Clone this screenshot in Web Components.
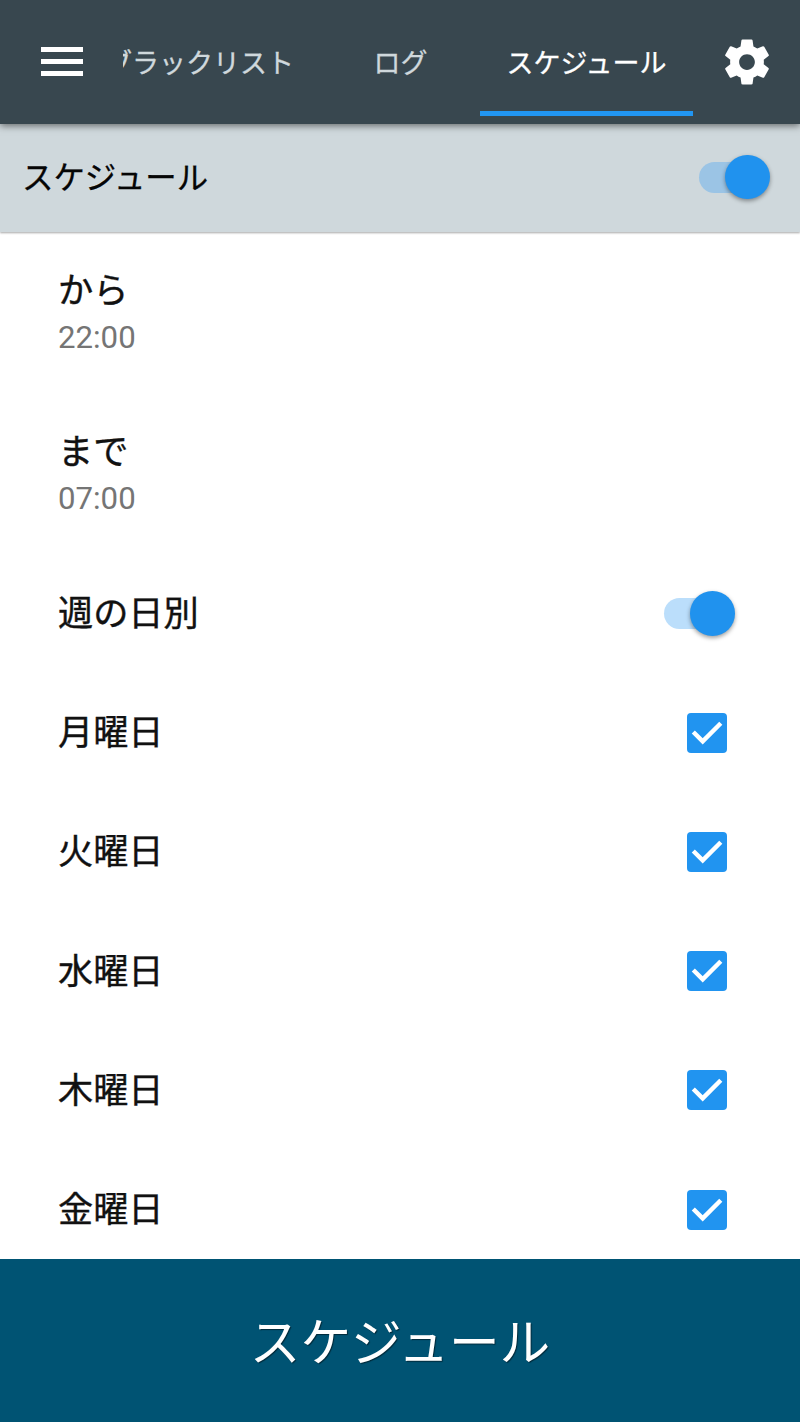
<!DOCTYPE html>
<html lang="ja">
<head>
<meta charset="utf-8">
<title>スケジュール</title>
<style>
    body {
        margin: 0;
        background: #fff;
        font-family: "Noto Sans CJK JP", sans-serif;
    }
</style>
</head>
<body>
<schedule-screen></schedule-screen>

<script>
class ToggleSwitch extends HTMLElement {
    constructor() {
        super();
        this.attachShadow({ mode: 'open' });
    }

    connectedCallback() {
        this.shadowRoot.innerHTML = `
            <style>
                :host {
                    display: flex;
                    align-items: center;
                    width: 71px;
                    height: 45px;
                    flex: none;
                }
                .track {
                    display: flex;
                    align-items: center;
                    justify-content: flex-end;
                    width: 62px;
                    height: 31px;
                    border-radius: 16px;
                    background: var(--track-color, #bbdefb);
                }
                .thumb {
                    flex: none;
                    width: 44.5px;
                    height: 44.5px;
                    margin-right: -8.6px;
                    border-radius: 50%;
                    background: #2092ee;
                    box-shadow: 0 2px 4px rgba(0, 0, 0, 0.38);
                }
            </style>
            <div class="track"><div class="thumb"></div></div>
        `;
    }
}

class CheckBox extends HTMLElement {
    constructor() {
        super();
        this.attachShadow({ mode: 'open' });
    }

    connectedCallback() {
        this.shadowRoot.innerHTML = `
            <style>
                :host {
                    display: block;
                    width: 40px;
                    height: 40px;
                    flex: none;
                    border-radius: 4px;
                    background: #2194f0;
                }
                svg {
                    display: block;
                }
            </style>
            <svg width="40" height="40" viewBox="0 0 40 40">
                <path d="M6.3 19 L15.7 28.4 L33.8 10.3" fill="none" stroke="#fff" stroke-width="4.4"/>
            </svg>
        `;
    }
}

class TabItem extends HTMLElement {
    constructor() {
        super();
        this.attachShadow({ mode: 'open' });
    }

    connectedCallback() {
        this.shadowRoot.innerHTML = `
            <style>
                :host {
                    display: flex;
                    align-items: center;
                    justify-content: center;
                    box-sizing: border-box;
                    flex: none;
                    height: 116px;
                    padding-top: 12px;
                    border-bottom: 5px solid transparent;
                    color: #cfd8dc;
                    font-size: 27px;
                    line-height: 38px;
                    white-space: nowrap;
                    -webkit-text-stroke: 0.3px;
                }
                :host([active]) {
                    color: #fff;
                    border-bottom-color: #2196f3;
                }
            </style>
            <span><slot></slot></span>
        `;
    }
}

class AppHeader extends HTMLElement {
    constructor() {
        super();
        this.attachShadow({ mode: 'open' });
    }

    connectedCallback() {
        this.shadowRoot.innerHTML = `
            <style>
                :host {
                    display: flex;
                    position: relative;
                    z-index: 1;
                    height: 124px;
                    background: #38474f;
                    box-shadow: 0 2px 7px rgba(0, 0, 0, 0.5);
                }
                .menu {
                    flex: none;
                    width: 42px;
                    padding: 47px 40px 0 41px;
                }
                .tabs {
                    display: flex;
                    justify-content: flex-end;
                    flex: none;
                    width: 570px;
                    overflow: hidden;
                }
                .settings {
                    flex: none;
                    margin: 35px 0 0 26.5px;
                }
                svg {
                    display: block;
                }
            </style>
            <div class="menu">
                <svg width="42" height="30" viewBox="0 0 42 30" fill="#fff">
                    <path d="M0 0h42v5H0zM0 12h42v5H0zM0 24h42v5H0z"/>
                </svg>
            </div>
            <div class="tabs"><slot></slot></div>
            <svg class="settings" width="54" height="54" viewBox="0 0 24 24" fill="#fff">
                <path d="M19.43 12.98c.04-.32.07-.64.07-.98s-.03-.66-.07-.98l2.11-1.65c.19-.15.24-.42.12-.64l-2-3.46c-.12-.22-.39-.3-.61-.22l-2.49 1c-.52-.4-1.08-.73-1.69-.98l-.38-2.65C14.46 2.18 14.25 2 14 2h-4c-.25 0-.46.18-.49.42l-.38 2.65c-.61.25-1.17.59-1.69.98l-2.49-1c-.23-.09-.49 0-.61.22l-2 3.46c-.13.22-.07.49.12.64l2.11 1.65c-.04.32-.07.65-.07.98s.03.66.07.98l-2.11 1.65c-.19.15-.24.42-.12.64l2 3.46c.12.22.39.3.61.22l2.49-1c.52.4 1.08.73 1.69.98l.38 2.65c.03.24.24.42.49.42h4c.25 0 .46-.18.49-.42l.38-2.65c.61-.25 1.17-.59 1.69-.98l2.49 1c.23.09.49 0 .61-.22l2-3.46c.12-.22.07-.49-.12-.64l-2.11-1.65zM12 15.5c-1.93 0-3.5-1.57-3.5-3.5s1.57-3.5 3.5-3.5 3.5 1.57 3.5 3.5-1.57 3.5-3.5 3.5z"/>
            </svg>
        `;
    }
}

class SectionBar extends HTMLElement {
    constructor() {
        super();
        this.attachShadow({ mode: 'open' });
    }

    connectedCallback() {
        this.shadowRoot.innerHTML = `
            <style>
                :host {
                    --track-color: #9bc4e5;
                    display: flex;
                    align-items: center;
                    justify-content: space-between;
                    position: relative;
                    box-sizing: border-box;
                    height: 108px;
                    padding: 0 30px 2px 22px;
                    background: #cfd8dc;
                    box-shadow: 0 1px 2px rgba(0, 0, 0, 0.35);
                    color: #050505;
                    font-size: 31.4px;
                    line-height: 45px;
                }
                span {
                    padding-bottom: 4px;
                    -webkit-text-stroke: 0.3px;
                }
            </style>
            <span><slot></slot></span>
            <toggle-switch></toggle-switch>
        `;
    }
}

class SettingRow extends HTMLElement {
    constructor() {
        super();
        this.attachShadow({ mode: 'open' });
    }

    connectedCallback() {
        const value = this.getAttribute('value');
        this.shadowRoot.innerHTML = `
            <style>
                :host {
                    display: flex;
                    align-items: center;
                    justify-content: space-between;
                    box-sizing: border-box;
                    height: 119.2px;
                    padding: 0 73px 0 58px;
                    color: #111;
                }
                :host([value]) {
                    height: 161px;
                }
                :host([wide]) {
                    padding-right: 65px;
                }
                .title {
                    padding-bottom: 5px;
                    font-size: 35.2px;
                    line-height: 50px;
                    -webkit-text-stroke: 0.4px;
                }
                :host([value]) .title {
                    padding-bottom: 3px;
                    margin-top: -3px;
                }
                .value {
                    color: #757575;
                    font-family: Roboto, sans-serif;
                    font-size: 31.2px;
                    line-height: 44px;
                }
            </style>
            <div>
                <div class="title"><slot></slot></div>
                ${value ? `<div class="value">${value}</div>` : ''}
            </div>
            <slot name="control"></slot>
        `;
    }
}

class CaptionBar extends HTMLElement {
    constructor() {
        super();
        this.attachShadow({ mode: 'open' });
    }

    connectedCallback() {
        this.shadowRoot.innerHTML = `
            <style>
                :host {
                    display: flex;
                    align-items: center;
                    justify-content: center;
                    flex: none;
                    box-sizing: border-box;
                    height: 163px;
                    padding-bottom: 3px;
                    background: #005373;
                    color: #fff;
                    font-size: 50.7px;
                    line-height: 72px;
                    text-shadow: 1px 1px 1px rgba(0, 0, 0, 0.5);
                }
            </style>
            <span><slot></slot></span>
        `;
    }
}

class ScheduleScreen extends HTMLElement {
    constructor() {
        super();
        this.attachShadow({ mode: 'open' });
    }

    connectedCallback() {
        const days = ['月曜日', '火曜日', '水曜日', '木曜日', '金曜日'];
        this.shadowRoot.innerHTML = `
            <style>
                :host {
                    display: flex;
                    flex-direction: column;
                    width: 800px;
                    height: 1422px;
                    overflow: hidden;
                }
                app-header, section-bar {
                    flex: none;
                }
                .list {
                    flex: 1;
                    min-height: 0;
                    overflow: hidden;
                }
                .blacklist {
                    width: 243px;
                }
                .log {
                    width: 159px;
                }
                .schedule {
                    width: 213px;
                }
            </style>
            <app-header>
                <tab-item class="blacklist">ブラックリスト</tab-item>
                <tab-item class="log">ログ</tab-item>
                <tab-item class="schedule" active>スケジュール</tab-item>
            </app-header>
            <section-bar>スケジュール</section-bar>
            <div class="list">
                <setting-row value="22:00">から</setting-row>
                <setting-row value="07:00">まで</setting-row>
                <setting-row wide>週の日別<toggle-switch slot="control"></toggle-switch></setting-row>
                ${days.map(day => `<setting-row>${day}<check-box slot="control"></check-box></setting-row>`).join('')}
            </div>
            <caption-bar>スケジュール</caption-bar>
        `;
    }
}

customElements.define('toggle-switch', ToggleSwitch);
customElements.define('check-box', CheckBox);
customElements.define('tab-item', TabItem);
customElements.define('app-header', AppHeader);
customElements.define('section-bar', SectionBar);
customElements.define('setting-row', SettingRow);
customElements.define('caption-bar', CaptionBar);
customElements.define('schedule-screen', ScheduleScreen);
</script>
</body>
</html>
